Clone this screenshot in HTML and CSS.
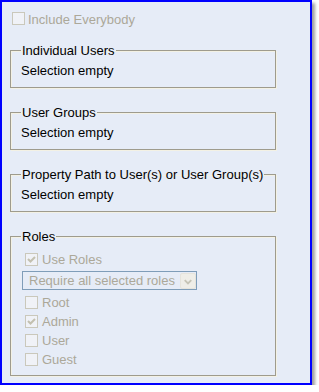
FILE: index.html
```html
<!DOCTYPE html>
<html>
<head>
<meta charset="utf-8">
<link rel="stylesheet" href="styles.css">
</head>
<body>
<div class="panel">
  <div class="check-row include">
    <span class="cb"></span><span class="label">Include Everybody</span>
  </div>

  <fieldset class="group">
    <legend>Individual Users</legend>
    <div class="value">Selection empty</div>
  </fieldset>

  <fieldset class="group">
    <legend>User Groups</legend>
    <div class="value">Selection empty</div>
  </fieldset>

  <fieldset class="group">
    <legend>Property Path to User(s) or User Group(s)</legend>
    <div class="value">Selection empty</div>
  </fieldset>

  <fieldset class="group roles">
    <legend>Roles</legend>
    <div class="check-row role">
      <span class="cb checked"><svg viewBox="0 0 11 11" width="11" height="11"><polyline points="2,5 4.5,7.5 9,3" fill="none" stroke="#c3c0b0" stroke-width="2"/></svg></span><span class="label">Use Roles</span>
    </div>
    <div class="select">
      <span class="select-text">Require all selected roles</span>
      <span class="select-btn"><svg viewBox="0 0 15 16" width="15" height="16"><polyline points="4,6 7.5,9.5 11,6" fill="none" stroke="#c6c4b6" stroke-width="2"/></svg></span>
    </div>
    <div class="check-row role first-role">
      <span class="cb"></span><span class="label">Root</span>
    </div>
    <div class="check-row role">
      <span class="cb checked"><svg viewBox="0 0 11 11" width="11" height="11"><polyline points="2,5 4.5,7.5 9,3" fill="none" stroke="#c3c0b0" stroke-width="2"/></svg></span><span class="label">Admin</span>
    </div>
    <div class="check-row role">
      <span class="cb"></span><span class="label">User</span>
    </div>
    <div class="check-row role">
      <span class="cb"></span><span class="label">Guest</span>
    </div>
  </fieldset>
</div>
</body>
</html>
```

FILE: styles.css
```css
html, body {
  margin: 0;
  padding: 0;
  background: #ffffff;
}

body {
  font-family: "Liberation Sans", Arial, sans-serif;
  font-size: 13px;
  line-height: 15px;
  color: #000000;
}

.panel {
  box-sizing: border-box;
  width: 312px;
  height: 385px;
  border: 2px solid #0000ff;
  background: #e6ecf7;
  padding: 7px 0 0 8px;
  box-shadow: 3px 3px 3px rgba(0, 0, 0, 0.38);
}

.check-row {
  display: flex;
  align-items: center;
  height: 19px;
  gap: 3px;
}

.include {
  margin-left: 2px;
}

.include .label {
  padding-top: 2px;
}

.label {
  color: #aca899;
  line-height: 19px;
}

.cb {
  box-sizing: border-box;
  width: 13px;
  height: 13px;
  border: 1px solid #cac8bb;
  background: #f0f2f7;
  display: flex;
  align-items: center;
  justify-content: center;
  flex: none;
}

.cb svg {
  display: block;
}

.group {
  box-sizing: border-box;
  width: 266px;
  margin: 17px 0 0 0;
  padding: 5px 0 9px 10px;
  border: 1px solid #9e9b8d;
  box-shadow: 1px 1px 0 #f3f1e4, inset 1px 1px 0 #f3f1e4;
  min-width: 0;
}

.panel > .group:first-of-type {
  margin-top: 15px;
}

.group legend {
  padding: 0 1px;
  line-height: 15px;
  color: #000000;
}

.value {
  line-height: 15px;
}

.roles {
  padding-top: 6px;
  padding-bottom: 6px;
}

.role {
  margin-left: 4px;
  gap: 4px;
}

.select {
  box-sizing: border-box;
  display: flex;
  align-items: center;
  justify-content: space-between;
  width: 175px;
  height: 19px;
  margin: 2px 0 3px 1px;
  border: 1px solid #7f9db9;
  background: #e6ecf7;
  padding: 0 0 0 6px;
}

.select-text {
  color: #aca899;
  line-height: 17px;
}

.select-btn {
  box-sizing: border-box;
  width: 16px;
  height: 16px;
  background: #efeee8;
  border: 1px solid #e6e4dc;
  border-radius: 2px;
  display: flex;
}

.select-btn svg {
  display: block;
}
```
